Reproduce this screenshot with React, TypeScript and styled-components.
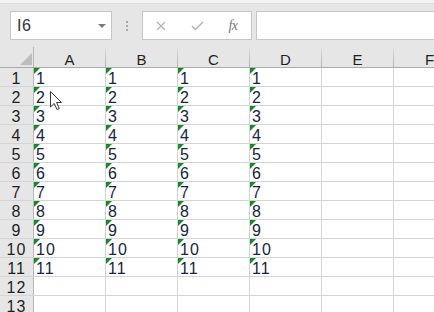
import React from "react";
import styled, { createGlobalStyle } from "styled-components";

const Global = createGlobalStyle`
  html, body { margin: 0; padding: 0; background: #ffffff; overflow: hidden; }
  body { width: 434px; height: 312px; font-family: "Liberation Sans", Arial, sans-serif; }
`;

const Page = styled.div`
  position: relative;
  width: 434px;
  height: 312px;
  overflow: hidden;
  display: flex;
  flex-direction: column;
  background: #ffffff;
`;

const TopStrip = styled.div`
  flex: none;
  height: 3px;
  background: #f3f3f3;
  border-bottom: 1px solid #dcdcdc;
`;

const Toolbar = styled.div`
  flex: none;
  height: 43px;
  box-sizing: border-box;
  padding: 7px 0 0 10px;
  background: #e6e6e6;
  display: flex;
  align-items: flex-start;
`;

const NameBox = styled.div`
  flex: none;
  width: 102px;
  height: 29px;
  box-sizing: border-box;
  border: 1px solid #c6c6c6;
  background: #ffffff;
  display: flex;
  align-items: center;
  justify-content: space-between;
  padding: 0 5px 0 6px;
  font-size: 16px;
  letter-spacing: 0.6px;
  color: #333333;
`;

const DropArrow = styled.span`
  width: 0;
  height: 0;
  border-left: 4px solid transparent;
  border-right: 4px solid transparent;
  border-top: 4px solid #7a7a7a;
`;

const Grip = styled.div`
  flex: none;
  height: 29px;
  margin: 0 14px;
  display: flex;
  flex-direction: column;
  justify-content: center;
  gap: 2px;
`;

const GripDot = styled.span`
  width: 2px;
  height: 2px;
  background: #a8a8a8;
`;

const FormulaButtons = styled.div`
  flex: none;
  width: 110px;
  height: 29px;
  box-sizing: border-box;
  border: 1px solid #c6c6c6;
  background: #ffffff;
  display: grid;
  grid-template-columns: repeat(3, 36px);
  align-items: center;
  justify-items: center;
`;

const Fx = styled.span`
  font-family: "Liberation Serif", serif;
  font-style: italic;
  font-size: 14px;
  color: #7a7a7a;
  letter-spacing: -0.5px;
`;

const FormulaInput = styled.div`
  flex: none;
  width: 240px;
  height: 29px;
  margin-left: 4px;
  box-sizing: border-box;
  border: 1px solid #c6c6c6;
  background: #ffffff;
`;

const Sheet = styled.div`
  flex: 1;
  display: flex;
  flex-direction: column;
`;

const HeaderRow = styled.div`
  flex: none;
  display: flex;
  height: 21px;
  box-sizing: border-box;
  background: #e6e6e6;
  border-bottom: 1px solid #ababab;
`;

const Corner = styled.div`
  flex: none;
  width: 34px;
  box-sizing: border-box;
  border-right: 1px solid #b8b8b8;
  display: flex;
  justify-content: flex-end;
  align-items: flex-end;
  padding: 0 1px 2px 0;
`;

const CornerTriangle = styled.span`
  width: 0;
  height: 0;
  border-left: 12px solid transparent;
  border-bottom: 12px solid #bdbdbd;
`;

const ColHeader = styled.div`
  flex: none;
  width: 72px;
  box-sizing: border-box;
  border-right: 1px solid;
  border-image: linear-gradient(to bottom, #e0e0e0, #b0b0b0) 1;
  display: flex;
  justify-content: center;
  align-items: flex-end;
  font-size: 15px;
  line-height: 14px;
  color: #1f1f1f;
`;

const Row = styled.div`
  flex: none;
  display: flex;
  height: 19px;
  box-sizing: border-box;
  border-bottom: 1px solid #d4d4d4;
`;

const RowHeader = styled.div`
  flex: none;
  width: 34px;
  box-sizing: border-box;
  background: #e6e6e6;
  border-right: 1px solid #b8b8b8;
  display: flex;
  justify-content: center;
  align-items: flex-end;
  font-size: 16px;
  line-height: 15px;
  letter-spacing: 1px;
  color: #1f1f1f;
`;

const Cell = styled.div<{ $flag?: boolean }>`
  flex: none;
  position: relative;
  width: 72px;
  box-sizing: border-box;
  border-right: 1px solid #d4d4d4;
  display: flex;
  align-items: flex-end;
  padding-left: 2px;
  font-size: 16px;
  line-height: 15px;
  letter-spacing: 1px;
  color: #17243f;

  &::before {
    content: "";
    display: ${(p) => (p.$flag ? "block" : "none")};
    position: absolute;
    left: 0;
    top: 0;
    width: 0;
    height: 0;
    border-top: 6px solid #16882c;
    border-right: 6px solid transparent;
  }
`;

const Cursor = styled.svg`
  position: absolute;
  left: 49px;
  top: 90px;
`;

const COLS = ["A", "B", "C", "D", "E", "F"];
const ROWS = Array.from({ length: 13 }, (_, i) => i + 1);

export default function App() {
  return (
    <Page>
      <Global />
      <TopStrip />
      <Toolbar>
        <NameBox>
          <span>I6</span>
          <DropArrow />
        </NameBox>
        <Grip>
          <GripDot />
          <GripDot />
          <GripDot />
        </Grip>
        <FormulaButtons>
          <svg width="10" height="10" viewBox="0 0 10 10">
            <path d="M1 1 L9 9 M9 1 L1 9" stroke="#b4b4b4" strokeWidth="1.3" fill="none" />
          </svg>
          <svg width="13" height="10" viewBox="0 0 13 10">
            <path d="M1 5 L4.5 8.5 L12 1" stroke="#b4b4b4" strokeWidth="1.4" fill="none" />
          </svg>
          <Fx>fx</Fx>
        </FormulaButtons>
        <FormulaInput />
      </Toolbar>
      <Sheet>
        <HeaderRow>
          <Corner>
            <CornerTriangle />
          </Corner>
          {COLS.map((c) => (
            <ColHeader key={c}>{c}</ColHeader>
          ))}
        </HeaderRow>
        {ROWS.map((r) => (
          <Row key={r}>
            <RowHeader>{r}</RowHeader>
            {COLS.map((c, ci) => {
              const filled = r <= 11 && ci < 4;
              return (
                <Cell key={c} $flag={filled}>
                  {filled ? r : ""}
                </Cell>
              );
            })}
          </Row>
        ))}
      </Sheet>
      <Cursor width="14" height="21" viewBox="0 0 14 21">
        <path
          d="M1.5 1.5 L1.5 17 L5.2 13.4 L8 19.5 L10.3 18.5 L7.6 12.5 L12.5 12.5 Z"
          fill="#ffffff"
          stroke="#3a3a3a"
          strokeWidth="1"
          strokeLinejoin="miter"
        />
      </Cursor>
    </Page>
  );
}
